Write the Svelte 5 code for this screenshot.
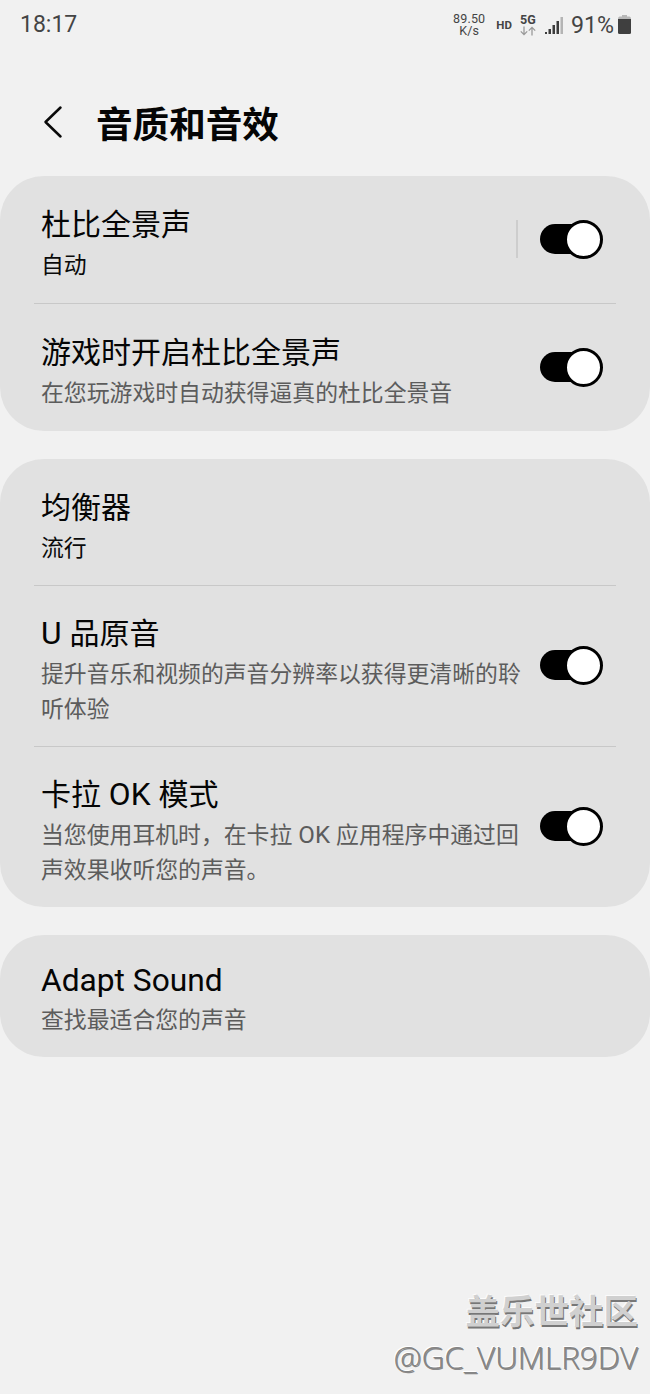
<script>
    let groups = [
        [
            { title: "杜比全景声", value: "自动", on: true, split: true, height: 127 },
            {
                title: "游戏时开启杜比全景声",
                desc: "在您玩游戏时自动获得逼真的杜比全景音",
                on: true,
                height: 127,
            },
        ],
        [
            { title: "均衡器", value: "流行", height: 126 },
            {
                title: "U 品原音",
                desc: "提升音乐和视频的声音分辨率以获得更清晰的聆听体验",
                on: true,
                height: 160,
            },
            {
                title: "卡拉 OK 模式",
                desc: "当您使用耳机时，在卡拉 OK 应用程序中通过回声效果收听您的声音。",
                on: true,
                height: 160,
            },
        ],
        [{ title: "Adapt Sound", desc: "查找最适合您的声音", height: 122 }],
    ];

    // latin words are set a little larger than the chinese text around them
    function parts(text) {
        return text.split(/([A-Za-z ]+)/).filter((part) => part);
    }

    function toggle(item) {
        item.on = !item.on;
        groups = groups;
    }
</script>

<div class="screen">
    <div class="status">
        <span class="time">18:17</span>
        <div class="speed"><span>89.50</span><span>K/s</span></div>
        <span class="hd">HD</span>
        <div class="network">
            <span>5G</span>
            <svg width="16" height="10" viewBox="0 0 16 10" fill="none" stroke="#9a9a9a" stroke-width="1.3">
                <path d="M4 0.5v8M0.8 5.4L4 8.6l3.2-3.2M12 9.5v-8M8.8 4.6L12 1.4l3.2 3.2" />
            </svg>
        </div>
        <svg class="signal" width="18" height="18" viewBox="0 0 18 18" fill="#3c3c3c">
            <rect x="0" y="15" width="2" height="2" />
            <rect x="3.500" y="12" width="2.500" height="5" />
            <rect x="7.500" y="8" width="2.500" height="9" />
            <rect x="11.500" y="4" width="2.500" height="13" />
            <rect x="15.500" y="0" width="2.500" height="17" fill="#b4b4b4" />
        </svg>
        <span class="percent">91%</span>
        <svg class="battery" width="13" height="20" viewBox="0 0 13 20">
            <path d="M4 0h5v1.500h2.500Q13 1.500 13 4H0q0-2.500 1.500-2.500H4z" fill="#b8b8b8" />
            <path d="M0 4h13v13.500q0 1.500-1.500 1.500h-10Q0 19 0 17.500z" fill="#3f3f3f" />
        </svg>
    </div>

    <header>
        <svg width="20" height="34" viewBox="0 0 20 34" fill="none" stroke="#0a0a0a" stroke-width="2.5" stroke-linecap="round" stroke-linejoin="round">
            <path d="M17.500 2.500L2.500 17l15 14.500" />
        </svg>
        <h1>音质和音效</h1>
    </header>

    {#each groups as group}
        <section class="card">
            {#each group as item}
                <div
                    class="row"
                    class:compact={group.length === 1}
                    class:tall={item.height > 150}
                    style="height: {item.height}px"
                >
                    <div class="text">
                        <h2>{#each parts(item.title) as part}{#if /[A-Z]/.test(part)}<span class="latin">{part}</span>{:else}{part}{/if}{/each}</h2>
                        <p class:value={item.value}>{#each parts(item.value || item.desc) as part}{#if /[A-Z]/.test(part)}<span class="latin">{part}</span>{:else}{part}{/if}{/each}</p>
                    </div>
                    {#if item.split}
                        <span class="separator"></span>
                    {/if}
                    {#if item.on !== undefined}
                        <button class="switch" class:off={!item.on} aria-label={item.title} on:click={() => toggle(item)}>
                            <span class="knob"></span>
                        </button>
                    {/if}
                </div>
            {/each}
        </section>
    {/each}

    <footer>
        <div class="community">盖乐世社区</div>
        <div class="user">@GC_VUMLR9DV</div>
    </footer>
</div>

<style>
    :global(body) {
        margin: 0;
        background: #f1f1f1;
    }

    .screen {
        box-sizing: border-box;
        width: 650px;
        height: 1394px;
        overflow: hidden;
        display: flex;
        flex-direction: column;
        background: #f1f1f1;
        color: #050505;
        font-family: Roboto, "Noto Sans CJK SC", sans-serif;
    }

    .status {
        display: flex;
        align-items: center;
        height: 50px;
        box-sizing: border-box;
        padding: 0 19px 1px 20px;
        color: #444;
    }

    .time {
        font-size: 23px;
        margin-right: auto;
    }

    .speed {
        display: flex;
        flex-direction: column;
        align-items: center;
        font-size: 12.500px;
        line-height: 12px;
        letter-spacing: 0.2px;
    }

    .hd {
        margin-left: 11px;
        font-size: 11.500px;
        font-weight: 700;
    }

    .network {
        display: flex;
        flex-direction: column;
        align-items: center;
        margin-left: 8px;
        font-size: 12.500px;
        font-weight: 700;
        line-height: 13px;
    }

    .signal {
        margin: 3px 0 0 9px;
    }

    .percent {
        margin-left: 8px;
        font-size: 23.200px;
    }

    .battery {
        margin-left: 4px;
    }

    header {
        display: flex;
        align-items: center;
        height: 126px;
        box-sizing: border-box;
        padding: 26px 0 0 43px;
        gap: 33px;
    }

    header svg {
        margin-top: -9px;
    }

    h1 {
        margin: 0;
        font-size: 36.600px;
        font-weight: 700;
        line-height: 44px;
    }

    .card {
        flex: none;
        margin-bottom: 28px;
        border-radius: 44px;
        background: #e1e1e1;
    }

    .row {
        display: flex;
        align-items: center;
        box-sizing: border-box;
        padding-right: 47px;
        margin-left: 34px;
    }

    .row + .row {
        border-top: 1px solid #c8c8c8;
        box-sizing: content-box;
        margin-right: 34px;
        padding-right: 13px;
    }

    .text {
        flex: none;
        align-self: flex-start;
        box-sizing: border-box;
        width: 489px;
        padding: 27px 0 0 7px;
    }

    .compact .text {
        padding-top: 24px;
    }

    .tall .text {
        padding-top: 26px;
    }

    h2 {
        margin: 0;
        font-size: 30px;
        font-weight: 400;
        line-height: 44px;
    }

    p {
        margin: 1px 0 0;
        color: #5c5c5c;
        font-size: 22.850px;
        line-height: 35px;
    }

    .compact p {
        margin-top: 0;
    }

    .value {
        color: #0a0a0a;
    }

    .latin {
        font-size: 1.057em;
        line-height: 1;
    }

    .separator {
        flex: none;
        width: 2px;
        height: 38px;
        margin: -1px 0 0 -7px;
        background: #cdcdcd;
    }

    .switch {
        flex: none;
        display: flex;
        align-items: center;
        justify-content: flex-end;
        width: 63px;
        height: 30px;
        margin: -1px 0 0 auto;
        padding: 0;
        border: none;
        background: linear-gradient(#000, #000) left / 54px 30px no-repeat;
        border-radius: 15px;
        cursor: pointer;
    }

    .tall .switch {
        margin-top: -2px;
    }

    .switch.off {
        justify-content: flex-start;
        background: #888;
    }

    .knob {
        flex: none;
        box-sizing: border-box;
        width: 39px;
        height: 39px;
        border: 3px solid #000;
        border-radius: 50%;
        background: #fff;
    }

    footer {
        display: flex;
        flex-direction: column;
        align-items: flex-end;
        margin-top: auto;
        padding: 0 12px 14px 0;
    }

    .community {
        font-size: 34.500px;
        font-weight: 700;
        line-height: 44px;
        color: #d0d0d0;
        text-shadow: 1px 2px 0 #777, -1px -1px 0 #fbfbfb;
    }

    .user {
        font-family: "Open Sans", "Noto Sans", sans-serif;
        font-size: 31.500px;
        font-weight: 300;
        line-height: 46px;
        color: #858585;
        text-shadow: 1px 1px 0 #8a8a8a, -1px -1px 0 #fff;
    }
</style>
